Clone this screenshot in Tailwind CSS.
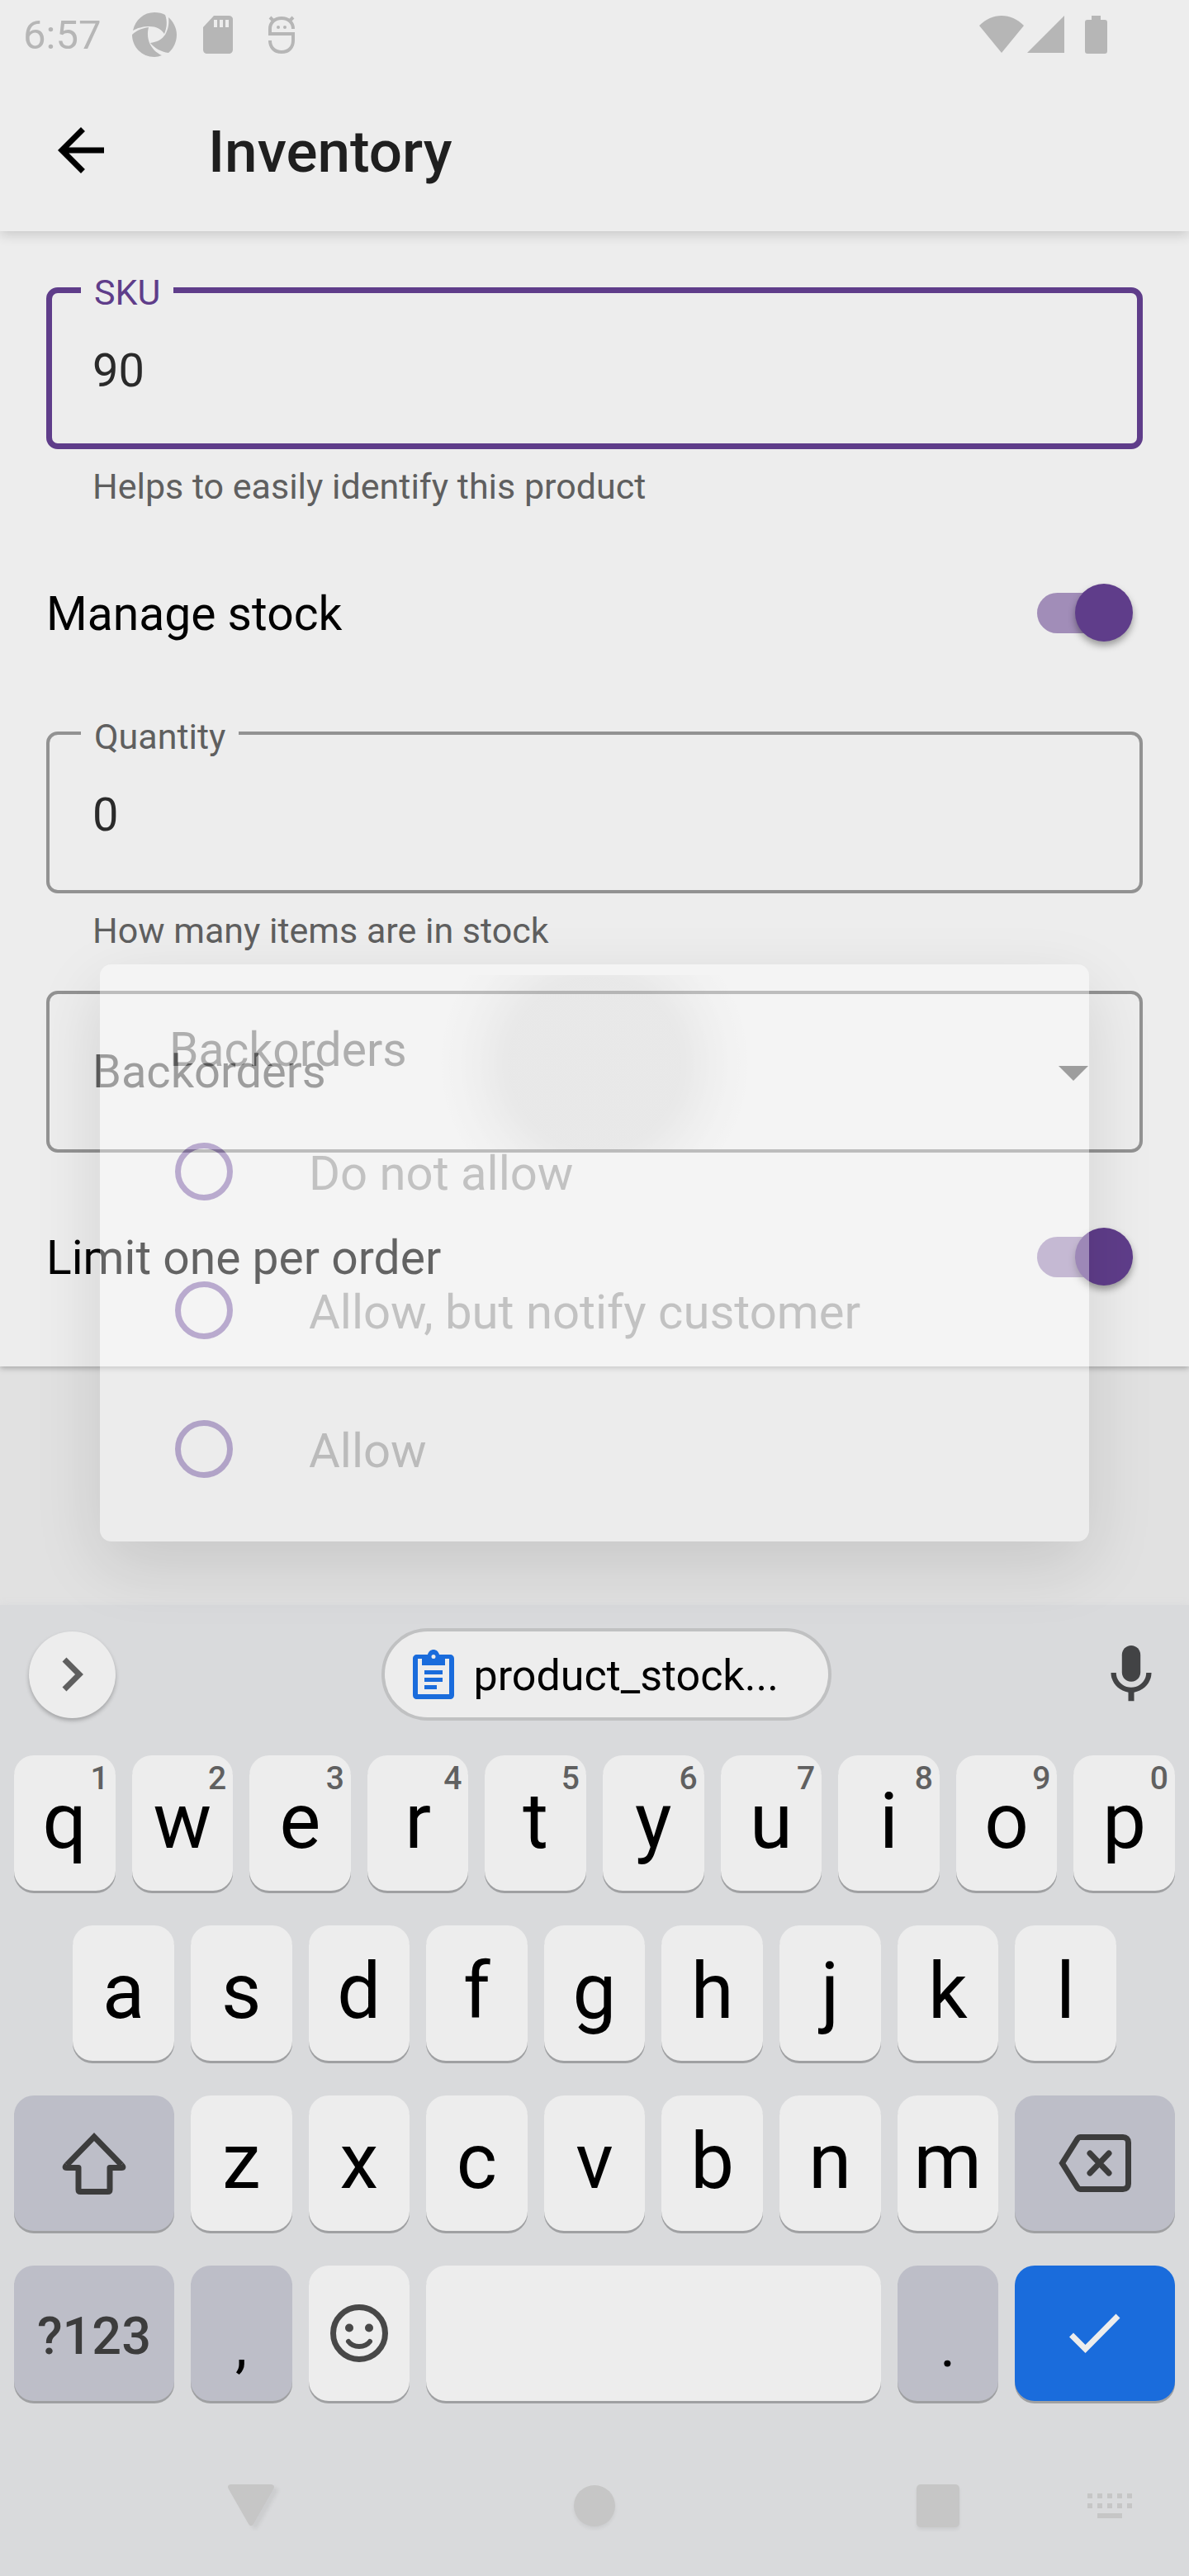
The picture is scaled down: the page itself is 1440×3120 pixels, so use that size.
<!DOCTYPE html>
<html lang="en">
<head>
<meta charset="utf-8">
<meta name="viewport" content="width=device-width, initial-scale=1">
<title>Inventory</title>
<script src="https://cdn.jsdelivr.net/npm/@tailwindcss/browser@4"></script>
</head>
<body class="font-[Roboto,sans-serif] text-black">
<div class="relative flex min-h-screen flex-col bg-[#e1e1e1]">

  <!-- Status bar and toolbar -->
  <header class="relative bg-[#ededed] shadow-[0_4px_14px_rgba(0,0,0,0.16)]">
    <div class="flex h-[84px] items-center justify-between pl-7 pr-[98px] text-[#b6b6b6]">
      <div class="flex items-center">
        <span class="pt-[2px] text-[49px] leading-[56px]">6:57</span>
        <svg class="ml-[38px] h-[54px] w-[54px]" viewBox="0 0 54 54" fill="currentColor" aria-hidden="true">
          <path d="M1 22C4 9 14 0 27 0c5 0 10 1 13 3 3 8 2 16-1 23-4-6-10-9-18-9-8 0-15 2-20 5z"/>
          <path d="M44 6c6 5 10 13 10 21 0 9-4 17-10 22-9-1-17-6-22-12 8-1 14-4 18-10 4-7 5-14 4-21z"/>
          <path d="M0 27c5-5 12-8 20-9-2 8-1 15 2 21 4 7 9 11 14 13-3 1-6 2-9 2C12 54 0 42 0 27z"/>
        </svg>
        <svg class="ml-8 h-[46px] w-9" viewBox="0 0 36 46" aria-hidden="true"><path fill="currentColor" fill-rule="evenodd" d="M13 0h18c3 0 5 2 5 4v37c0 3-2 5-5 5H5c-3 0-5-2-5-5V14zM13 5v9h4V5zm7 0v9h4V5zm7 0v9h4V5z"/></svg>
        <svg class="ml-[43px] h-[46px] w-8" viewBox="0 0 32 46" fill="none" stroke="currentColor" stroke-width="4" aria-hidden="true">
          <path d="M30 16C30 8 24 3 16 3S2 8 2 16v6h28v8c0 8-5 14-14 14S2 38 2 30"/><path d="M2 2l5 5M30 2l-5 5"/>
          <circle cx="12" cy="14" r="2" fill="currentColor" stroke="none"/><circle cx="20" cy="14" r="2" fill="currentColor" stroke="none"/>
        </svg>
      </div>
      <div class="flex items-center">
        <svg class="h-[46px] w-[54px]" viewBox="0 0 54 46" fill="currentColor" aria-hidden="true"><path d="M27 45L0 12C8 4 17 0 27 0s19 4 27 12z"/></svg>
        <svg class="ml-1 h-[46px] w-[46px]" viewBox="0 0 46 46" fill="currentColor" aria-hidden="true"><path d="M0 45h45V0z"/></svg>
        <svg class="ml-6 h-[46px] w-7" viewBox="0 0 28 46" fill="currentColor" aria-hidden="true"><path d="M8 0h11v5h5c2 0 3 1 3 3v35c0 2-1 3-3 3H3c-2 0-3-1-3-3V8c0-2 1-3 3-3h5z"/></svg>
      </div>
    </div>
    <div class="flex h-[196px] items-center pl-14">
      <button type="button" aria-label="Back"><svg class="h-[84px] w-[84px]" viewBox="0 0 24 24"><path d="M20 11H7.83l5.59-5.59L12 4l-8 8 8 8 1.41-1.41L7.83 13H20z"/></svg></button>
      <h1 class="ml-28 pt-1 text-[71px] font-medium leading-[84px] text-[#1f1f1f]">Inventory</h1>
    </div>
  </header>

  <main class="grow">
    <form class="bg-[#ededed] px-14 pb-[91px] pt-[68px] shadow-[0_2px_7px_rgba(0,0,0,0.28)]">
      <div class="relative">
        <label for="sku" class="absolute -top-[22px] left-[42px] bg-[#ededed] px-4 text-[43px] leading-[56px] text-[#5f3d8a]">SKU</label>
        <input id="sku" type="text" value="90" class="block h-[196px] w-full rounded-[14px] border-[7px] border-[#5f3d8a] px-[49px] pt-[6px] text-[56px] text-[#2a2a2a] outline-none">
      </div>
      <p class="mt-4 px-14 text-[43px] leading-[58px] text-[#5f5f5f]">Helps to easily identify this product</p>

      <div class="mt-[82px] flex h-[84px] items-center justify-between">
        <label for="manage" class="pt-1 text-[57px] leading-[72px]">Manage stock</label>
        <input id="manage" type="checkbox" role="switch" checked class="relative mr-3 flex h-[70px] w-[116px] appearance-none items-center before:h-[49px] before:w-[108px] before:rounded-full before:bg-[#a18db8] after:absolute after:right-0 after:top-0 after:size-[70px] after:rounded-full after:bg-[#5f3d8a] after:shadow-[0_5px_8px_rgba(0,0,0,0.35)]">
      </div>

      <div class="relative mt-[102px]">
        <label for="quantity" class="absolute -top-[22px] left-[42px] bg-[#ededed] px-4 text-[43px] leading-[56px] text-[#5f5f5f]">Quantity</label>
        <input id="quantity" type="text" value="0" class="block h-[196px] w-full rounded-[14px] border-4 border-[#929292] px-[52px] pt-[6px] text-[56px] text-[#2a2a2a] outline-none">
      </div>
      <p class="mt-4 px-14 text-[43px] leading-[58px] text-[#5f5f5f]">How many items are in stock</p>

      <div class="relative mt-11">
        <select id="backorders" aria-label="Backorders" class="block h-[196px] w-full appearance-none rounded-[14px] border-4 border-[#929292] px-[52px] text-[56px] text-[#5f5f5f]"><option>Backorders</option></select>
        <svg class="pointer-events-none absolute right-[66px] top-[91px] h-[18px] w-9" viewBox="0 0 36 18" fill="#5f5f5f" aria-hidden="true"><path d="M0 0h36L18 18z"/></svg>
        <!-- touch ripple -->
        <div class="pointer-events-none absolute inset-x-0 -top-[19px] h-[212px] bg-[radial-gradient(circle_at_50%_107px,rgba(0,0,0,0.08)_0px,rgba(0,0,0,0.08)_105px,rgba(0,0,0,0.035)_140px,rgba(0,0,0,0.01)_165px,transparent_190px)]"></div>
      </div>

      <div class="mt-[84px] flex h-[84px] items-center justify-between">
        <label for="limit" class="pt-1 text-[57px] leading-[72px]">Limit one per order</label>
        <input id="limit" type="checkbox" role="switch" checked class="relative mr-3 flex h-[70px] w-[116px] appearance-none items-center before:h-[49px] before:w-[108px] before:rounded-full before:bg-[#a18db8] after:absolute after:right-0 after:top-0 after:size-[70px] after:rounded-full after:bg-[#5f3d8a] after:shadow-[0_5px_8px_rgba(0,0,0,0.35)]">
      </div>
    </form>
  </main>

  <!-- On-screen keyboard -->
  <section aria-label="Keyboard" class="relative bg-[#d9dadc] shadow-[0_0_10px_#d9dadc]">
    <div class="flex h-[168px] items-center justify-between pl-[35px] pr-7">
      <button type="button" aria-label="More" class="flex size-[105px] items-center justify-center rounded-full bg-[#ededed] shadow-[0_3px_5px_rgba(0,0,0,0.25)]">
        <svg class="h-[42px] w-[26px]" viewBox="0 0 26 42" fill="none" stroke="#5f5f5f" stroke-width="7"><path d="M3 3l18 18L3 39"/></svg>
      </button>
      <button type="button" class="flex h-28 w-[545px] items-center rounded-full border-4 border-[#c0c1c2] bg-[#ededed] pl-[34px] text-[52px] leading-[56px]">
        <svg class="h-[60px] w-[50px] shrink-0" viewBox="0 0 50 60" aria-hidden="true"><path fill="#1a6cdc" fill-rule="evenodd" d="M5 6h13c1-4 4-6 7-6s6 2 7 6h13c3 0 5 2 5 5v44c0 3-2 5-5 5H5c-3 0-5-2-5-5V11c0-3 2-5 5-5zM6 11v43h38V11h-5v8H11v-8zM25 6a2.500 2.500 0 100 5 2.500 2.500 0 000-5zM14 25h22v5H14zm0 9h22v5H14zm0 9h15v5H14z"/></svg>
        <span class="ml-6 pt-1">product_stock...</span>
      </button>
      <button type="button" aria-label="Voice input"><svg class="h-[84px] w-[84px]" viewBox="0 0 24 24" fill="#424345"><path d="M12 14.500c1.800 0 3.200-1.450 3.200-3.250V5.250C15.200 3.450 13.800 2 12 2S8.800 3.450 8.800 5.250v6c0 1.800 1.400 3.250 3.200 3.250z"/><path d="M17.200 11.400c0 3-2.450 5.100-5.200 5.100s-5.200-2.100-5.200-5.100H5c0 3.450 2.650 6.250 6 6.800V21.200h2v-3c3.350-.55 6-3.350 6-6.800z"/></svg></button>
    </div>

    <div id="keys" class="mt-[14px] grid auto-rows-[164px] grid-cols-20 gap-y-[42px] px-[7px]"></div>

    <nav class="relative mt-[42px] grid h-[170px] grid-cols-[96fr_416fr_416fr_416fr_96fr] items-center justify-items-center">
      <button type="button" aria-label="Hide keyboard" class="col-start-2"><svg class="h-[52px] w-[58px] drop-shadow-[5px_4px_2px_rgba(0,0,0,0.06)]" viewBox="0 0 58 52" fill="#c6c6c6"><path d="M5 0h48c4 0 5 3 3 6L32 48c-2 3-4 3-6 0L2 6C0 3 1 0 5 0z"/></svg></button>
      <button type="button" aria-label="Home"><span class="block size-[50px] rounded-full bg-[#c6c6c6] shadow-[0_3px_4px_rgba(0,0,0,0.06)]"></span></button>
      <button type="button" aria-label="Recent apps"><span class="block size-[52px] rounded-[5px] bg-[#c6c6c6] shadow-[0_3px_4px_rgba(0,0,0,0.06)]"></span></button>
      <button type="button" aria-label="Switch keyboard" class="absolute right-[69px]"><svg class="h-[30px] w-[54px]" viewBox="0 0 54 30" fill="#c6c6c6"><path d="M0 0h6v6H0zM12 0h6v6h-6zM24 0h6v6h-6zM36 0h6v6h-6zM48 0h6v6h-6zM0 12h6v6H0zM12 12h6v6h-6zM24 12h6v6h-6zM36 12h6v6h-6zM48 12h6v6h-6zM12 24h30v6H12z"/></svg></button>
    </nav>
  </section>

  <!-- Backorders dialog, fading in -->
  <div class="pointer-events-none absolute inset-0 flex items-center px-[121px] pb-[169px] pt-[84px]">
    <div role="dialog" aria-labelledby="dialog-title" class="w-full rounded-[14px] bg-white pb-7 pl-[84px] pt-[68px] opacity-[0.39] shadow-[0_28px_84px_rgba(0,0,0,0.3)]">
      <h2 id="dialog-title" class="text-[57px] leading-[72px] text-[#4e4e4e]">Backorders</h2>
      <div class="mt-[27px] text-[58px] leading-[72px] text-[#818181]">
        <label class="flex h-[168px] items-center gap-[92px] pl-[7px]"><input type="radio" name="backorder" class="size-[70px] appearance-none rounded-full border-[7px] border-[#6844a0]"><span class="pt-1">Do not allow</span></label>
        <label class="flex h-[168px] items-center gap-[92px] pl-[7px]"><input type="radio" name="backorder" class="size-[70px] appearance-none rounded-full border-[7px] border-[#6844a0]"><span class="pt-1">Allow, but notify customer</span></label>
        <label class="flex h-[168px] items-center gap-[92px] pl-[7px]"><input type="radio" name="backorder" class="size-[70px] appearance-none rounded-full border-[7px] border-[#6844a0]"><span class="pt-1">Allow</span></label>
      </div>
    </div>
  </div>
</div>

<script>
  const base = 'relative mx-[10px] flex items-center justify-center rounded-3xl shadow-[0_3px_0_#9fa0a2]';
  const light = 'bg-[#ededed]';
  const dark = 'bg-[#bdbec8]';
  const blue = 'bg-[#1a6cdc]';
  const letter = 'pb-1 text-[94px] leading-[110px]';
  const word = 'pt-2 text-[63px] leading-[72px] font-medium text-[#3c3c3c]';
  const mark = 'pt-8 text-[72px] leading-[84px]';
  const one = 'col-span-2';
  const wide = 'col-span-3';
  const space = 'col-span-8';
  const hint = 'absolute right-2 top-[7px] text-[39px] leading-[42px] font-medium text-[#606060]';
  const shift = '<svg class="h-[76px] w-[78px]" viewBox="0 0 78 76" fill="none" stroke="#3c3c3c" stroke-width="7" stroke-linejoin="round"><path stroke-linejoin="miter" d="M6 40L39 6l33 34"/><path d="M6 40c-3 3-2 3.500 0 3.500h14V70c0 2 1 2.500 2.500 2.500h33c1.500 0 2.500-.5 2.500-2.500V43.500h14c2 0 3-.5 0-3.500"/></svg>';
  const del = '<svg class="h-[70px] w-[88px]" viewBox="0 0 88 70" fill="none" stroke="#3c3c3c" stroke-width="7" stroke-linecap="round"><path d="M26 3.500h52c4 0 6.500 2.500 6.500 6.500v50c0 4-2.500 6.500-6.500 6.500H26c-1.500 0-2-.7-3-2L4.500 35 23 5.500c1-1.300 1.500-2 3-2z"/><path d="M38 23l23 24M61 23L38 47"/></svg>';
  const smile = '<svg class="size-[70px]" viewBox="0 0 70 70" fill="none" stroke="#484848" stroke-width="7"><circle cx="35" cy="35" r="31.500"/><circle cx="23" cy="28.500" r="5" fill="#484848" stroke="none"/><circle cx="47" cy="28.500" r="5" fill="#484848" stroke="none"/><path stroke-width="6" stroke-linecap="round" d="M22 45c6 8 20 8 26 0"/></svg>';
  const check = '<svg class="h-[48px] w-[62px]" viewBox="0 0 62 48" fill="none" stroke="#ededed" stroke-width="7"><path d="M2.500 26l17 17L59 3"/></svg>';

  const key = (content, label, ...classes) =>
    `<button type="button" aria-label="${label}" class="${[base, ...classes].join(' ')}">${content}</button>`;

  const keys = [
    ...[...'qwertyuiop'].map((c, i) => key(`${c}<span class="${hint}">${(i + 1) % 10}</span>`, c, light, letter, one)),
    ...[...'asdfghjkl'].map((c, i) => key(c, c, light, letter, one, i ? '' : 'col-start-2')),
    key(shift, 'Shift', dark, 'col-start-1 col-end-4'),
    ...[...'zxcvbnm'].map(c => key(c, c, light, letter, one)),
    key(del, 'Delete', dark, wide),
    key('?123', 'Symbols', dark, wide, word),
    key(',', 'Comma', dark, one, mark),
    key(smile, 'Emoji', light, one),
    key('', 'Space', light, space),
    key('.', 'Period', dark, one, mark),
    key(check, 'Done', blue, wide),
  ];
  document.getElementById('keys').innerHTML = keys.join('');
</script>
</body>
</html>
